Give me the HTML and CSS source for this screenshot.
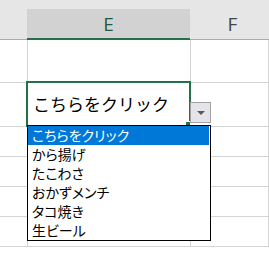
FILE: index.html
```html
<!DOCTYPE html>
<html lang="ja">
<head>
    <meta charset="UTF-8">
    <meta name="viewport" content="width=device-width, initial-scale=1.0">
    <title>Excel dropdown</title>
    <link rel="stylesheet" href="styles.css">
</head>
<body>
    <div class="sheet">
        <div class="col-heads">
            <div class="col-head col-d"></div>
            <div class="col-head col-e active">E</div>
            <div class="col-head col-f">F</div>
        </div>

        <div class="row row-tall">
            <div class="cell col-d"></div>
            <div class="cell col-e"></div>
            <div class="cell col-f"></div>
        </div>

        <div class="row row-tall2">
            <div class="cell col-d"></div>
            <div class="cell col-e current">
                <span class="cell-text">こちらをクリック</span>
                <div class="selection"></div>
                <div class="fill-handle"></div>
                <div class="drop-btn"><span class="arrow"></span></div>
                <ul class="drop-list">
                    <li class="picked">こちらをクリック</li>
                    <li>から揚げ</li>
                    <li>たこわさ</li>
                    <li>おかずメンチ</li>
                    <li>タコ焼き</li>
                    <li>生ビール</li>
                </ul>
            </div>
            <div class="cell col-f"></div>
        </div>

        <div class="row">
            <div class="cell col-d"></div>
            <div class="cell col-e"></div>
            <div class="cell col-f"></div>
        </div>
        <div class="row">
            <div class="cell col-d"></div>
            <div class="cell col-e"></div>
            <div class="cell col-f"></div>
        </div>
        <div class="row">
            <div class="cell col-d"></div>
            <div class="cell col-e"></div>
            <div class="cell col-f"></div>
        </div>
        <div class="row">
            <div class="cell col-d"></div>
            <div class="cell col-e"></div>
            <div class="cell col-f"></div>
        </div>
    </div>
</body>
</html>
```

FILE: styles.css
```css
body {
    margin: 0;
    background-color: #fff;
    font-family: "Noto Sans CJK JP", sans-serif;
    overflow: hidden;
}

.sheet {
    width: 269px;
    height: 254px;
    overflow: hidden;
}

/* column header strip */
.col-heads {
    display: flex;
    padding-top: 9px;
    background-color: #e6e6e6;
    border-bottom: 1px solid #ababab;
}

.col-head {
    box-sizing: border-box;
    height: 30px;
    display: flex;
    align-items: center;
    justify-content: center;
    font-family: "Open Sans", "Noto Sans", sans-serif;
    font-size: 19px;
    color: #444;
}

.col-head.active {
    background-color: #d2d2d2;
    color: #1f5a40;
    border-bottom: 2px solid #217346;
    margin-bottom: -1px;
    height: 31px;
}

.col-d { width: 27px; flex: none; }
.col-e { width: 163px; flex: none; }
.col-f { flex: 1; }

.col-head.col-f {
    padding-left: 6px;
}

/* grid body */
.row {
    display: flex;
    height: 30px;
}

.row-tall { height: 43px; }
.row-tall2 { height: 44px; }

.cell {
    box-sizing: border-box;
    border-bottom: 1px solid #d4d4d4;
    border-right: 1px solid #d4d4d4;
}

.cell.col-d { width: 28px; }

.current {
    position: relative;
    display: flex;
    align-items: center;
    padding-left: 5px;
}

.cell-text {
    font-size: 17px;
    line-height: 20px;
    margin-top: -2px;
    color: #000;
}

.selection {
    position: absolute;
    left: -2px;
    top: -2px;
    right: -1px;
    bottom: -1px;
    border: 2px solid #217346;
}

.fill-handle {
    position: absolute;
    right: -1px;
    bottom: -1px;
    width: 4px;
    height: 4px;
    background-color: #217346;
    border: 1px solid #fff;
}

.drop-btn {
    position: absolute;
    left: 162px;
    top: 19px;
    width: 21px;
    height: 21px;
    box-sizing: border-box;
    background-color: #e4e4ea;
    border: 1px solid #a3a3a3;
    display: flex;
    align-items: center;
    justify-content: center;
}

.arrow {
    width: 0;
    height: 0;
    border-left: 4px solid transparent;
    border-right: 4px solid transparent;
    border-top: 4px solid #595959;
}

.drop-list {
    position: absolute;
    left: -1px;
    top: 42px;
    width: 184px;
    box-sizing: border-box;
    margin: 0;
    padding: 0;
    list-style: none;
    background-color: #fff;
    border: 1px solid #000;
    z-index: 2;
}

.drop-list li {
    height: 19px;
    line-height: 19px;
    padding-left: 4px;
    font-size: 14px;
    font-feature-settings: "palt";
    color: #000;
}

.drop-list li.picked {
    background-color: #0078d7;
    color: #fff;
    margin-right: 1px;
}
```
